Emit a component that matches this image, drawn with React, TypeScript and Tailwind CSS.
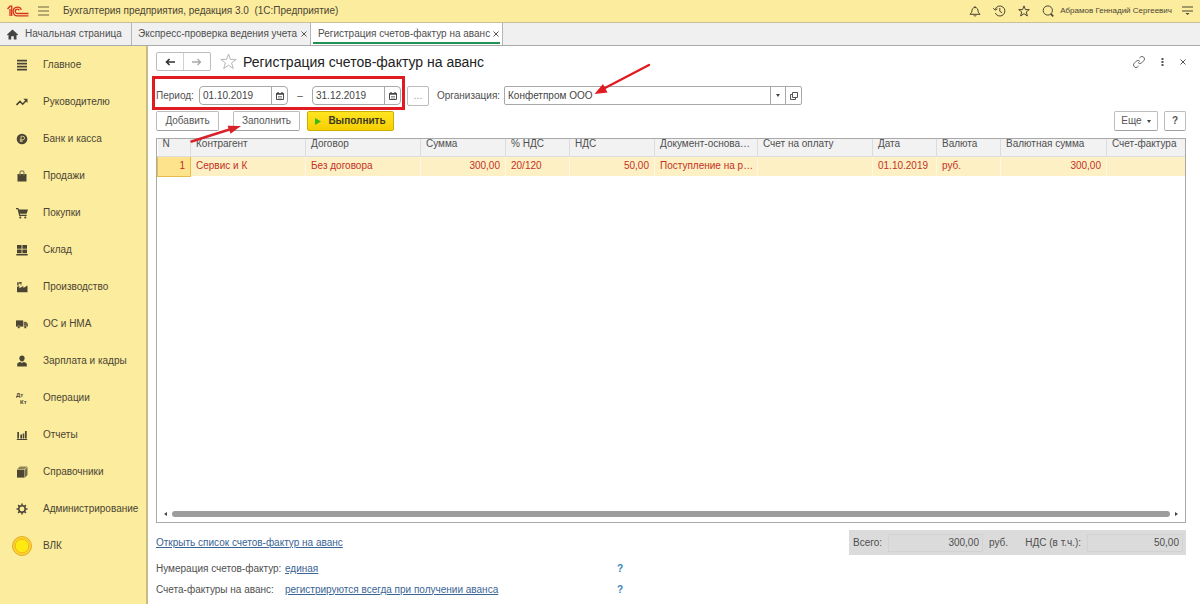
import React, { useState } from 'react';

const menu = [
    { name: 'Главное', icon: 'main' },
    { name: 'Руководителю', icon: 'trend' },
    { name: 'Банк и касса', icon: 'bank' },
    { name: 'Продажи', icon: 'bag' },
    { name: 'Покупки', icon: 'cart' },
    { name: 'Склад', icon: 'stock' },
    { name: 'Производство', icon: 'factory' },
    { name: 'ОС и НМА', icon: 'truck' },
    { name: 'Зарплата и кадры', icon: 'person' },
    { name: 'Операции', icon: 'dtkt' },
    { name: 'Отчеты', icon: 'reports' },
    { name: 'Справочники', icon: 'books' },
    { name: 'Администрирование', icon: 'gear' },
    { name: 'ВЛК', icon: 'coin' },
];

const columns = [
    { title: 'N', width: 'w-[33px]', right: true },
    { title: 'Контрагент', width: 'w-[115px]' },
    { title: 'Договор', width: 'w-[115px]' },
    { title: 'Сумма', width: 'w-[85px]', right: true },
    { title: '% НДС', width: 'w-[64px]' },
    { title: 'НДС', width: 'w-[85px]', right: true },
    { title: 'Документ-основа…', width: 'w-[103px]' },
    { title: 'Счет на оплату', width: 'w-[115px]' },
    { title: 'Дата', width: 'w-[64px]' },
    { title: 'Валюта', width: 'w-[64px]' },
    { title: 'Валютная сумма', width: 'w-[106px]', right: true },
    { title: 'Счет-фактура', width: '' },
];

const rows = [
    ['1', 'Сервис и К', 'Без договора', '300,00', '20/120', '50,00', 'Поступление на р…', '', '01.10.2019', 'руб.', '300,00', ''],
];

function MenuIcon({ name }: { name: string }) {
    if (name === 'coin') {
        return (
            <svg className="size-5" viewBox="0 0 20 20">
                <circle cx="10" cy="10" r="9.5" fill="#fbd22e" stroke="#e3ac2c" />
                <circle cx="10" cy="10" r="6.8" fill="#ffe913" stroke="#efb91b" />
            </svg>
        );
    }
    return (
        <svg className="size-3" viewBox="0 0 12 12" fill="#4b4534">
            {name === 'main' && <path d="M1 .8h10v1.6H1zM1 3.8h10v1.6H1zM1 6.8h10v1.6H1zM1 9.8h10v1.6H1z" />}
            {name === 'trend' && (
                <>
                    <path d="M.5 9 4 5.5l2.7 2.7L10 4.7" fill="none" stroke="#4b4534" strokeWidth="1.6" />
                    <path d="M7.3 2.8h4.2V7z" />
                </>
            )}
            {name === 'bank' && (
                <>
                    <circle cx="6" cy="6" r="5.3" />
                    <path d="M5 9.2V3.3h1.8a1.7 1.7 0 0 1 0 3.5H3.8M3.8 8.1h3" fill="none" stroke="#d5c58a" strokeWidth="1" />
                </>
            )}
            {name === 'bag' && (
                <>
                    <path d="M1.5 4h9v7.5h-9z" />
                    <path d="M4 5.6V2.8a2 2 0 0 1 4 0v2.8" fill="none" stroke="#857b56" strokeWidth="1.2" />
                </>
            )}
            {name === 'cart' && (
                <>
                    <path d="M0 1h2.4l.5 1.4H12l-1.4 4.4H3.8l.3 1h6.6V9H3.2L1.6 2.2H0z" />
                    <circle cx="4.3" cy="10.5" r="1.1" />
                    <circle cx="9.3" cy="10.5" r="1.1" />
                </>
            )}
            {name === 'stock' && <path d="M1 1h4.6v3.8H1zM6.4 1H11v3.8H6.4zM1 5.5h4.6v3.8H1zM6.4 5.5H11v3.8H6.4zM.3 10h11.4v1.4H.3z" />}
            {name === 'factory' && (
                <path d="M1 11.3V6l1.200-.8h1.200v2L7.400 5v2l4.100-2.600v6.900zM1.200 1.200h1.500v3.200H1.200zM3.200 1h2.400v1.800H3.200zM4.500 3.200h1v1h-1z" />
            )}
            {name === 'truck' && (
                <>
                    <path d="M0 2.4h7.2v6.2H0z" />
                    <path d="M7.7 3.8h2.6L12 6v2.6H7.7z" fill="#6e6547" />
                    <circle cx="2.8" cy="9" r="1.4" stroke="#fcec9e" strokeWidth=".4" />
                    <circle cx="9.3" cy="9" r="1.4" stroke="#fcec9e" strokeWidth=".4" />
                </>
            )}
            {name === 'person' && (
                <>
                    <path d="M6 .6c1.6 0 2.6 1 2.6 2.6S7.500 6.400 6 6.400 3.400 4.800 3.400 3.200 4.400.6 6 .6z" />
                    <path d="M1.200 11.400V9.200C1.200 7.700 2.800 7.100 4.500 6.900L6 8l1.500-1.100c1.700.2 3.300.8 3.300 2.300v2.200z" />
                </>
            )}
            {name === 'dtkt' && (
                <g fontFamily="Liberation Sans" fontWeight="bold" fontSize="6">
                    <text x="0" y="5">Дт</text>
                    <text x="4" y="11.500">Кт</text>
                </g>
            )}
            {name === 'reports' && <path d="M1.300 3H3v6.500H1.300zM4.300 5.500H6v4H4.300zM6.700 4.500h1.600v5H6.700zM9 2h1.700v7.500H9zM.8 10h10.400v1H.8z" />}
            {name === 'books' && (
                <>
                    <path d="M1 3.600h7.500v8H1z" />
                    <path d="M1.300 3 3.800.6h7.600L8.900 3z" fill="#8d8259" />
                    <path d="M9 3.500 11.500 1v8L9 11.500z" fill="#746b4a" />
                </>
            )}
            {name === 'gear' && (
                <>
                    <circle cx="6" cy="6" r="3.200" fill="none" stroke="#4b4534" strokeWidth="1.500" />
                    <path
                        d="M6 .5v2M6 9.500v2M.5 6h2M9.500 6h2M2.100 2.100l1.400 1.400M8.500 8.500l1.400 1.400M2.100 9.900l1.400-1.400M8.500 3.500l1.400-1.400"
                        stroke="#4b4534"
                        strokeWidth="1.500"
                    />
                </>
            )}
        </svg>
    );
}

function CalendarIcon() {
    return (
        <svg className="size-2" viewBox="0 0 8 8" fill="none" stroke="#4a4a4a">
            <path d="M.5 1.500h7v6h-7z" />
            <path d="M0 2h8M2 0v1.500M6 0v1.500" strokeWidth="1.300" />
            <path d="M2 4.500h4M2 6h4" strokeWidth=".6" />
        </svg>
    );
}

function DateField({ label, value, onChange }: { label: string; value: string; onChange: (v: string) => void }) {
    return (
        <div className="flex h-[19px] w-[89px] rounded-sm border border-[#a8a8a8] bg-white">
            <input
                type="text"
                aria-label={label}
                value={value}
                onChange={(e) => onChange(e.target.value)}
                className="w-full min-w-0 pl-[3px] text-[10px] text-[#444] outline-none"
            />
            <button type="button" aria-label="Календарь" className="flex w-4 shrink-0 items-center justify-center border-l border-[#a8a8a8]">
                <CalendarIcon />
            </button>
        </div>
    );
}

function Cross() {
    return (
        <svg className="size-[6px]" viewBox="0 0 6 6" stroke="#555" strokeWidth="1">
            <path d="M.5.5l5 5M5.500.5l-5 5" />
        </svg>
    );
}

const button = 'flex h-5 items-center justify-center rounded-xs border border-[#bdbdbd] border-b-[#a0a0a0] bg-white text-[10px] text-[#555]';
const link = 'text-[#3a6494] underline';

export default function App() {
    const [from, setFrom] = useState('01.10.2019');
    const [to, setTo] = useState('31.12.2019');
    const [company, setCompany] = useState('Конфетпром ООО');

    return (
        <div className="flex min-h-screen flex-col bg-white font-['Liberation_Sans',sans-serif] text-[10px] leading-3 text-[#4f4f4f]">
            {/* Title bar */}
            <header className="flex h-[23px] items-center border-b border-[#c9c09a] bg-[#fcec9e] px-[7px] text-[#4b4534]">
                <svg className="h-3 w-[22px]" viewBox="0 0 22 12" fill="none" stroke="#d6331f" strokeWidth="1.300">
                    <path d="M.5 4 3 1.200h1.700V11M3 4v7" />
                    <path d="M14.400 4.800A4.300 4.300 0 1 0 10.800 10.800H21.500" />
                    <path d="M12.400 5.400A2.200 2.200 0 1 0 10.800 8.500H21.500" />
                </svg>
                <button type="button" aria-label="Меню" className="ml-[9px]">
                    <svg className="h-[10px] w-[11px]" viewBox="0 0 11 10" stroke="#6d6440">
                        <path d="M0 1h11M0 5h11M0 9h11" />
                    </svg>
                </button>
                <h1 className="ml-[14px] whitespace-pre">Бухгалтерия предприятия, редакция 3.0  (1С:Предприятие)</h1>
                <div className="ml-auto flex items-center gap-3">
                    <button type="button" aria-label="Уведомления">
                        <svg className="size-3" viewBox="0 0 12 12" fill="none" stroke="#4b4534">
                            <path d="M1 9.300h10L9.300 7.300C8.900 4 8.300 2.500 6 2.500S3.100 4 2.700 7.300zM6 1v1.500M4.800 10.300c.3 1 2.100 1 2.400 0" />
                        </svg>
                    </button>
                    <button type="button" aria-label="История">
                        <svg className="h-3 w-[13px]" viewBox="0 0 13 12" fill="none" stroke="#4b4534">
                            <path d="M2.200 4.300A5 5 0 1 1 2.300 8M6.800 3v3.300l2.300 1.500" />
                            <path d="M.3 3.200 2 5.200l2.400-1.300" />
                        </svg>
                    </button>
                    <button type="button" aria-label="Избранное">
                        <svg className="size-3" viewBox="0 0 12 12" fill="none" stroke="#4b4534">
                            <path d="M6 .9l1.400 3.700h3.900L8.200 7l1.200 4L6 8.700 2.600 11l1.200-4L.7 4.600h3.900z" />
                        </svg>
                    </button>
                    <button type="button" aria-label="Поиск">
                        <svg className="size-3" viewBox="0 0 12 12" fill="none" stroke="#4b4534">
                            <circle cx="5.800" cy="5.500" r="4.600" />
                            <path d="M8.800 8.800l2.400 2.500" strokeWidth="1.700" />
                        </svg>
                    </button>
                    <span className="-ml-[6px] text-[8px]">Абрамов Геннадий Сергеевич</span>
                    <button type="button" aria-label="Настройки окна" className="-ml-[2px]">
                        <svg className="h-[10px] w-[11px]" viewBox="0 0 11 10" stroke="#4b4534">
                            <path d="M0 1h11M0 5h11" />
                            <path d="M3.500 7h4l-2 2z" fill="#4b4534" stroke="none" />
                        </svg>
                    </button>
                </div>
            </header>

            {/* Tabs */}
            <nav className="flex h-[23px] border-b border-[#a9a9a9] bg-[#f0f0f0]">
                <a href="#home" className="flex w-[132px] items-center border-r border-[#b5b5b5] pl-[7px]">
                    <svg className="mr-[7px] size-[11px]" viewBox="0 0 11 11" fill="#444">
                        <path d="M5.500.5 0 5.600l.8.8.7-.6v4.700h2.700V7.300h2.600v3.200h2.700V5.800l.7.6.8-.8z" />
                    </svg>
                    Начальная страница
                </a>
                <div className="flex w-[179px] items-center justify-between border-r border-[#b5b5b5] pr-[3px] pl-[6px]">
                    <a href="#check">Экспресс-проверка ведения учета</a>
                    <button type="button" aria-label="Закрыть вкладку"><Cross /></button>
                </div>
                <div className="flex w-[192px] border-r border-[#b5b5b5] bg-white px-[2px]">
                    <div className="mb-px flex w-full items-center justify-between border-b-2 border-[#1f9254] pt-[2px] pr-px pl-[5px]">
                        <a href="#advance">Регистрация счетов-фактур на аванс</a>
                        <button type="button" aria-label="Закрыть вкладку"><Cross /></button>
                    </div>
                </div>
            </nav>

            <div className="flex flex-1">
                {/* Sidebar */}
                <aside className="w-[148px] shrink-0 border-r-2 border-[#c8bb86] bg-[#fcec9e] text-[#4b4534]">
                    {menu.map((item) => (
                        <a key={item.name} href="#section" className="flex h-[37px] items-center">
                            <span className="flex w-[43px] justify-center">
                                <MenuIcon name={item.icon} />
                            </span>
                            {item.name}
                        </a>
                    ))}
                </aside>

                <main className="flex min-w-0 flex-1 flex-col pt-[6px] pr-[14px] pl-2">
                    {/* Form title */}
                    <div className="flex h-[19px] items-center">
                        <div className="flex h-[19px] w-[55px] rounded-xs border border-[#bdbdbd]">
                            <button type="button" aria-label="Назад" className="flex flex-1 items-center justify-center border-r border-[#d0d0d0]">
                                <svg className="h-2 w-[10px]" viewBox="0 0 10 8" fill="none" stroke="#333" strokeWidth="1.600">
                                    <path d="M10 4H1.500M4.500 1 1.500 4l3 3" />
                                </svg>
                            </button>
                            <button type="button" aria-label="Вперед" className="flex flex-1 items-center justify-center">
                                <svg className="h-2 w-[10px]" viewBox="0 0 10 8" fill="none" stroke="#aaa" strokeWidth="1.300">
                                    <path d="M0 4h8.500M5.500 1l3 3-3 3" />
                                </svg>
                            </button>
                        </div>
                        <button type="button" aria-label="В избранное" className="ml-[9px]">
                            <svg className="size-[17px]" viewBox="0 0 17 17" fill="none" stroke="#b5b5b5">
                                <path d="M8.500 1l1.900 5.400h5.800l-4.600 3.500 1.700 5.700-4.800-3.400-4.800 3.400 1.700-5.700L.8 6.400h5.800z" />
                            </svg>
                        </button>
                        <h2 className="ml-[6px] text-[14px] leading-4 text-[#222]">Регистрация счетов-фактур на аванс</h2>
                        <div className="ml-auto flex items-center gap-4">
                            <button type="button" aria-label="Получить ссылку">
                                <svg className="size-3" viewBox="0 0 24 24" fill="none" stroke="#666" strokeWidth="2">
                                    <path d="M10 13a5 5 0 0 0 7.540.54l4-4a5 5 0 0 0-7.070-7.070l-1.720 1.710" />
                                    <path d="M14 11a5 5 0 0 0-7.540-.54l-4 4a5 5 0 0 0 7.070 7.070l1.710-1.710" />
                                </svg>
                            </button>
                            <button type="button" aria-label="Еще действия">
                                <svg className="h-2 w-[3px]" viewBox="0 0 3 8" fill="#555">
                                    <path d="M.5 0h2v2h-2zM.5 3h2v2h-2zM.5 6h2v2h-2z" />
                                </svg>
                            </button>
                            <button type="button" aria-label="Закрыть"><Cross /></button>
                        </div>
                    </div>

                    {/* Period and company */}
                    <div className="relative mt-[15px] flex h-[19px] items-center">
                        <div className="relative flex items-center">
                            <span className="w-[43px]">Период:</span>
                            <DateField label="Начало периода" value={from} onChange={setFrom} />
                            <span className="w-6 text-center">–</span>
                            <DateField label="Конец периода" value={to} onChange={setTo} />
                            <div className="pointer-events-none absolute -inset-x-1 -top-[10px] -bottom-[5px] border-[3px] border-[#e01b22]" />
                        </div>
                        <button type="button" aria-label="Выбрать период" className="ml-[6px] flex h-5 w-[22px] items-center justify-center rounded-xs border border-[#bdbdbd] text-[#999]">
                            ...
                        </button>
                        <label htmlFor="company" className="ml-2 w-[67px]">Организация:</label>
                        <div className="flex h-[19px] w-[298px] rounded-xs border border-[#a8a8a8]">
                            <input
                                id="company"
                                type="text"
                                value={company}
                                onChange={(e) => setCompany(e.target.value)}
                                className="min-w-0 flex-1 pl-[3px] text-[#444] outline-none"
                            />
                            <button type="button" aria-label="Выбрать" className="flex w-[15px] items-center justify-center border-l border-[#a8a8a8]">
                                <svg className="h-[3px] w-1" viewBox="0 0 4 3" fill="#444"><path d="M0 0h4L2 3z" /></svg>
                            </button>
                            <button type="button" aria-label="Открыть" className="flex w-4 items-center justify-center border-l border-[#a8a8a8]">
                                <svg className="size-2" viewBox="0 0 8 8" fill="none" stroke="#555">
                                    <path d="M2.500.5h5v5h-5zM2.500 2.500h-2v5h5v-2" />
                                </svg>
                            </button>
                        </div>
                        <svg className="pointer-events-none absolute -top-6 left-[436px] h-[34px] w-[60px]" viewBox="0 0 60 34">
                            <path d="M57 3 12 26.500" stroke="#e01b22" strokeWidth="2.400" strokeLinecap="round" />
                            <path d="M2.500 32 11 22l4.500 8.500z" fill="#e01b22" />
                        </svg>
                    </div>

                    {/* Commands */}
                    <div className="relative mt-[6px] flex">
                        <button type="button" className={`${button} w-[63px]`}>Добавить</button>
                        <button type="button" className={`${button} ml-[14px] w-[67px]`}>Заполнить</button>
                        <button
                            type="button"
                            className="ml-[7px] flex h-5 w-[87px] items-center justify-center gap-[7px] rounded-xs border border-[#cfae00] bg-linear-to-b from-[#ffe51f] to-[#f5cf00] text-[10px] font-bold text-[#3d3a20]"
                        >
                            <svg className="h-[7px] w-[6px]" viewBox="0 0 6 7" fill="#3fb618"><path d="M0 0l6 3.500L0 7z" /></svg>
                            Выполнить
                        </button>
                        <button type="button" className={`${button} ml-auto w-11 gap-[5px]`}>
                            Еще
                            <svg className="h-[3px] w-1" viewBox="0 0 4 3" fill="#444"><path d="M0 0h4L2 3z" /></svg>
                        </button>
                        <button type="button" aria-label="Справка" className={`${button} ml-[6px] w-[22px] font-bold`}>?</button>
                        <svg className="pointer-events-none absolute top-[13px] left-[33px] z-10 h-5 w-14" viewBox="0 0 56 20">
                            <path d="M2.500 17.500 42 5" stroke="#d8222a" strokeWidth="2.400" strokeLinecap="round" />
                            <path d="M52 2 38.500 1.800 41.500 9.800z" fill="#d8222a" />
                        </svg>
                    </div>

                    {/* Invoices */}
                    <section className="mt-[7px] flex flex-1 flex-col overflow-hidden border border-[#a9a9a9]">
                        <table className="w-full table-fixed border-collapse">
                            <thead>
                                <tr className="h-[17px] bg-[#f2f2f2]">
                                    {columns.map((col) => (
                                        <th
                                            key={col.title}
                                            scope="col"
                                            className={`${col.width} border-r border-b border-[#dcdcdc] pl-[5px] text-left align-top leading-[10px] font-normal whitespace-nowrap last:border-r-0`}
                                        >
                                            {col.title}
                                        </th>
                                    ))}
                                </tr>
                            </thead>
                            <tbody>
                                {rows.map((row) => (
                                    <tr key={row[0]} className="h-5 bg-[#fdf0c5] text-[#c4301f]">
                                        {row.map((cell, i) => (
                                            <td
                                                key={i}
                                                className={`border-r border-[#fdf8e6] pl-[5px] whitespace-nowrap first:border first:border-[#e3bd4d] first:bg-[#fde48c] last:border-r-0 ${columns[i].right ? 'pr-[5px] text-right' : ''}`}
                                            >
                                                {cell}
                                            </td>
                                        ))}
                                    </tr>
                                ))}
                            </tbody>
                        </table>
                        <div className="mt-auto mb-[5px] flex h-[6px] items-center px-[7px]">
                            <svg className="h-1 w-[3px]" viewBox="0 0 3 4" fill="#444"><path d="M3 0v4L0 2z" /></svg>
                            <div className="mx-[5px] h-[6px] flex-1 rounded-full bg-[#9d9d9d]" />
                            <svg className="h-1 w-[3px]" viewBox="0 0 3 4" fill="#444"><path d="M0 0v4l3-2z" /></svg>
                        </div>
                    </section>

                    {/* Totals */}
                    <div className="mt-[7px] flex h-[25px] items-center justify-between">
                        <a href="#list" className={link}>Открыть список счетов-фактур на аванс</a>
                        <div className="flex h-[25px] w-[337px] items-center bg-[#dbdbdb] pr-[3px] pl-1">
                            <label htmlFor="total" className="w-[35px]">Всего:</label>
                            <input id="total" readOnly value="300,00" className="h-[18px] w-[95px] border border-[#d2d2d2] pr-[3px] text-right" />
                            <span className="ml-[6px]">руб.</span>
                            <label htmlFor="vat" className="ml-auto">НДС (в т.ч.):</label>
                            <input id="vat" readOnly value="50,00" className="ml-[6px] h-[18px] w-[96px] border border-[#d2d2d2] pr-[3px] text-right" />
                        </div>
                    </div>

                    {/* Settings */}
                    <div className="mt-[3px] mb-1 text-[10px]">
                        <div className="flex h-[21px] items-center">
                            <span className="w-[129px]">Нумерация счетов-фактур:</span>
                            <span className="w-[332px]"><a href="#numbering" className={link}>единая</a></span>
                            <button type="button" aria-label="Справка по нумерации" className="font-bold text-[#3584b8]">?</button>
                        </div>
                        <div className="flex h-[21px] items-center">
                            <span className="w-[129px]">Счета-фактуры на аванс:</span>
                            <span className="w-[332px]"><a href="#rule" className={link}>регистрируются всегда при получении аванса</a></span>
                            <button type="button" aria-label="Справка по авансам" className="font-bold text-[#3584b8]">?</button>
                        </div>
                    </div>
                </main>
            </div>
        </div>
    );
}
